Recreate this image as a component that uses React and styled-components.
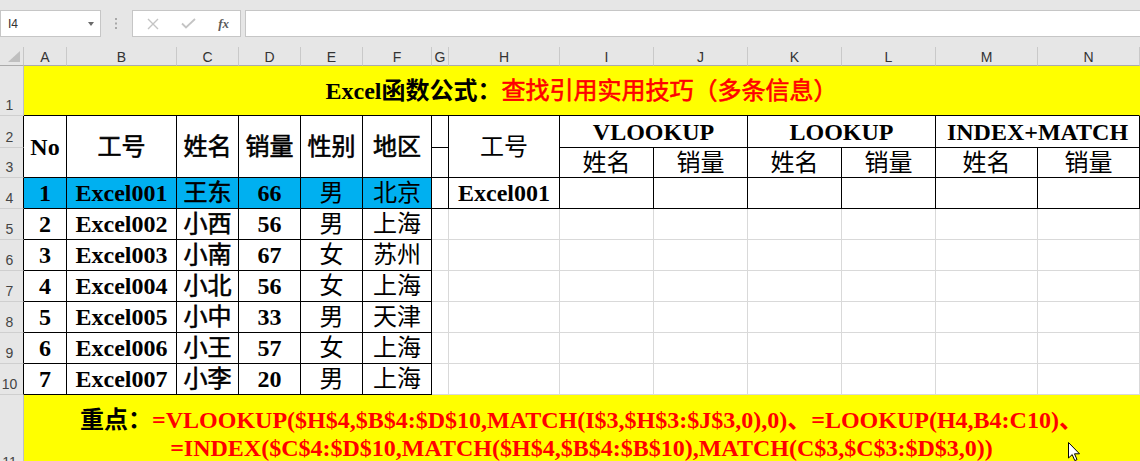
import styled, {createGlobalStyle} from 'styled-components'

const cols = ['A','B','C','D','E','F','G','H','I','J','K','L','M','N']

const data = [
  ['1','Excel001','王东','66','男','北京'],
  ['2','Excel002','小西','56','男','上海'],
  ['3','Excel003','小南','67','女','苏州'],
  ['4','Excel004','小北','56','女','上海'],
  ['5','Excel005','小中','33','男','天津'],
  ['6','Excel006','小王','57','女','上海'],
  ['7','Excel007','小李','20','男','上海'],
]

// latin columns bold, name column semi-bold (regular + stroke), gender/region regular
const weights = [700, 700, 400, 700, 400, 400]

const BLACK = '#000'

function FormulaBar(){
  return(
    <Bar>
      <NameBox>
        <span>I4</span>
        <Caret/>
      </NameBox>
      <Grip>
        <svg width="3" height="11" viewBox="0 0 3 11">
          <rect x="0" y="0" width="2" height="2" fill="#a8a8a8"/>
          <rect x="0" y="4.5" width="2" height="2" fill="#a8a8a8"/>
          <rect x="0" y="9" width="2" height="2" fill="#a8a8a8"/>
        </svg>
      </Grip>
      <FxBox>
        <svg width="12" height="12" viewBox="0 0 12 12">
          <path d="M1 1 L11 11 M11 1 L1 11" stroke="#c4c4c4" strokeWidth="1.4" fill="none"/>
        </svg>
        <svg width="15" height="11" viewBox="0 0 15 11">
          <path d="M1 5.5 L5 9.5 L14 1" stroke="#c4c4c4" strokeWidth="1.8" fill="none"/>
        </svg>
        <Fx>fx</Fx>
      </FxBox>
      <Input/>
    </Bar>
  )
}

function App(){
  return(
    <Page>
      <GlobalStyle/>
      <FormulaBar/>
      <Sheet>
        <Corner><svg width="12" height="11" viewBox="0 0 12 11"><path d="M0 11 L12 11 L12 0 Z" fill="#bfbfbf"/></svg></Corner>
        {cols.map(c => <ColHead key={c}>{c}</ColHead>)}

        <RowHead>1</RowHead>
        <Cell $cols={14} $bg="#ffff00" $line="#ffff00" $bottom={BLACK}>
          <span>Excel函数公式：</span><Red $weight={400} $stroke>查找引用实用技巧（多条信息）</Red>
        </Cell>

        <RowHead $edge={BLACK}>2</RowHead>
        <Cell $rows={2} $line={BLACK}>No</Cell>
        {['工号','姓名','销量','性别','地区'].map(t => (
          <Cell key={t} $rows={2} $line={BLACK} $weight={400} $stroke>{t}</Cell>
        ))}
        <Cell $line={BLACK}/>
        <Cell $rows={2} $line={BLACK} $weight={400}>工号</Cell>
        <Cell $cols={2} $line={BLACK}>VLOOKUP</Cell>
        <Cell $cols={2} $line={BLACK}>LOOKUP</Cell>
        <Cell $cols={2} $line={BLACK}>INDEX+MATCH</Cell>

        <RowHead $edge={BLACK}>3</RowHead>
        <Cell $line={BLACK}/>
        {['姓名','销量','姓名','销量','姓名','销量'].map((t,i) => (
          <Cell key={i} $line={BLACK} $weight={400}>{t}</Cell>
        ))}

        {data.map((r,i) => {
          const first = i === 0
          const right = first ? BLACK : undefined
          return [
            <RowHead key={'h'+i} $edge={BLACK}>{i + 4}</RowHead>,
            ...r.map((v,j) => (
              <Cell key={'c'+i+j} $line={BLACK} $bg={first ? '#00b0f0' : '#fff'} $weight={weights[j]} $stroke={j === 2}>{v}</Cell>
            )),
            <Cell key={'g'+i} $line={right}/>,
            <Cell key={'hh'+i} $line={right}>{first ? 'Excel001' : ''}</Cell>,
            ...[0,1,2,3,4,5].map(k => <Cell key={'e'+i+k} $line={right}/>),
          ]
        })}

        <RowHead>11</RowHead>
        <Cell $cols={14} $bg="#ffff00" $line="#ffff00" $stack>
          <Line><span>重点：</span><Red>=VLOOKUP($H$4,$B$4:$D$10,MATCH(I$3,$H$3:$J$3,0),0)、=LOOKUP(H4,B4:C10)、</Red></Line>
          <Line><Red>=INDEX($C$4:$D$10,MATCH($H$4,$B$4:$B$10),MATCH(C$3,$C$3:$D$3,0))</Red></Line>
        </Cell>
      </Sheet>
      <Cursor width="13" height="20" viewBox="0 0 13 20">
        <path d="M0.5 0.5 L0.5 16 L4.2 12.6 L6.8 18.6 L9 17.6 L6.5 11.8 L11.5 11.8 Z" fill="#fff" stroke="#000" strokeWidth="1"/>
      </Cursor>
    </Page>
  )
}

export default App

const GlobalStyle = createGlobalStyle`
html, body {
  margin: 0;
  padding: 0;
  overflow: hidden;
  background: #e6e6e6;
}
`
const Page = styled.div`
width: 1140px;
height: 461px;
overflow: hidden;
position: relative;
background: #e6e6e6;
`
const Bar = styled.div`
display: flex;
align-items: center;
height: 27px;
padding: 10px 0;
background: #e6e6e6;
font-family: "Liberation Sans", Arial, sans-serif;
`
const NameBox = styled.div`
box-sizing: border-box;
width: 101px;
height: 27px;
background: #fff;
border: 1px solid #c6c6c6;
display: flex;
align-items: center;
justify-content: space-between;
padding: 0 6px 0 7px;
font-size: 12px;
color: #333;
`
const Caret = styled.div`
width: 0;
height: 0;
border-left: 3.5px solid transparent;
border-right: 3.5px solid transparent;
border-top: 4px solid #6a6a6a;
`
const Grip = styled.div`
width: 31px;
display: flex;
justify-content: center;
`
const FxBox = styled.div`
box-sizing: border-box;
width: 109px;
height: 27px;
background: #fff;
border: 1px solid #c6c6c6;
display: flex;
align-items: center;
justify-content: space-between;
padding: 0 11px 0 14px;
`
const Fx = styled.span`
font-family: "Liberation Serif", serif;
font-style: italic;
font-weight: 700;
font-size: 13px;
color: #5a5a5a;
`
const Input = styled.div`
box-sizing: border-box;
flex: 1;
height: 27px;
margin-left: 4px;
background: #fff;
border: 1px solid #c6c6c6;
border-right: none;
`
const Sheet = styled.div`
display: grid;
grid-template-columns: 24px 43px 110px 62px 62px 62px 69px 17px 111px 94px 94px 94px 94px 102px 102px;
grid-template-rows: 19px 50px 32px 30px repeat(7, 31px) 78px;
background: #fff;
font-family: "Liberation Serif", "Noto Sans CJK SC", serif;
`
const Corner = styled.div`
box-sizing: border-box;
background: #e6e6e6;
border-right: 1px solid #c6c6c6;
border-bottom: 1px solid #ababab;
display: flex;
align-items: flex-end;
justify-content: flex-end;
padding: 0 3px 3px 0;
`
const ColHead = styled.div`
box-sizing: border-box;
background: #e6e6e6;
border-right: 1px solid #c9c9c9;
border-bottom: 1px solid #ababab;
display: flex;
align-items: center;
justify-content: center;
padding-top: 2px;
font-family: "Liberation Sans", Arial, sans-serif;
font-size: 14px;
color: #333;
`
const RowHead = styled.div`
box-sizing: border-box;
background: #e6e6e6;
border-right: 1px solid ${p => p.$edge || '#c0c0c0'};
border-bottom: 1px solid #cfcfcf;
display: flex;
align-items: flex-end;
justify-content: center;
padding: 0 4px 3px 0;
font-family: "Liberation Sans", Arial, sans-serif;
font-size: 14px;
line-height: 1;
color: #444;
`
const Cell = styled.div`
box-sizing: border-box;
grid-column: span ${p => p.$cols || 1};
grid-row: span ${p => p.$rows || 1};
background: ${p => p.$bg || '#fff'};
border-right: 1px solid ${p => p.$line || '#d9d9d9'};
border-bottom: 1px solid ${p => p.$bottom || p.$line || '#d9d9d9'};
display: flex;
flex-direction: ${p => p.$stack ? 'column' : 'row'};
align-items: center;
justify-content: center;
font-size: 24px;
font-weight: ${p => p.$weight || 700};
line-height: 1;
color: #000;
white-space: nowrap;
${p => p.$stroke ? '-webkit-text-stroke: 0.6px currentColor;' : ''}
`
const Red = styled.span`
color: #ff0000;
${p => p.$weight ? `font-weight: ${p.$weight};` : ''}
${p => p.$stroke ? '-webkit-text-stroke: 0.6px currentColor;' : ''}
`
const Line = styled.div`
line-height: 28px;
`
const Cursor = styled.svg`
position: absolute;
left: 1068px;
top: 442px;
`
